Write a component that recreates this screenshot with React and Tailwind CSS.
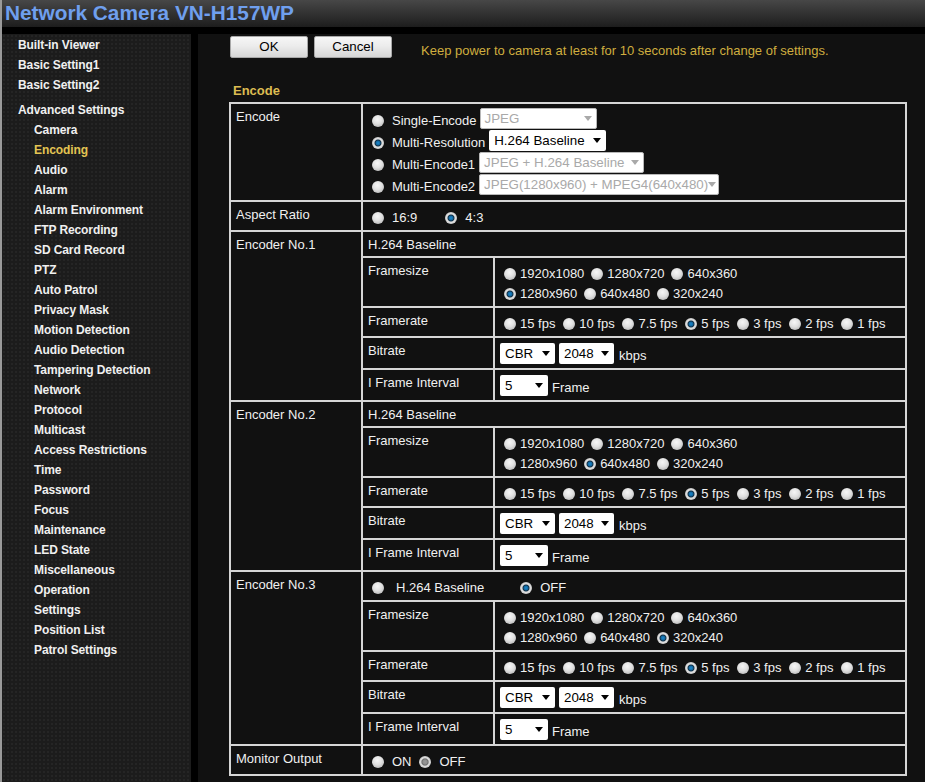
const font = { fontFamily: '"Liberation Sans", Arial, sans-serif' };

function Radio({ state = "off", className = "" }) {
  const look =
    state === "on"
      ? "bg-[radial-gradient(circle_at_50%_50%,#1b8ad0_0,#12679f_24%,#0f2f46_34%,#e4e4e4_48%,#c8c8c8_70%,#8e8e8e_100%)]"
      : state === "grey"
      ? "bg-[radial-gradient(circle_at_50%_50%,#9a9a9a_0,#8c8c8c_26%,#6d6d6d_36%,#dedede_50%,#c4c4c4_72%,#8e8e8e_100%)]"
      : "bg-[radial-gradient(circle_at_45%_35%,#f6f6f6_0,#e0e0e0_45%,#bcbcbc_80%,#8c8c8c_100%)]";
  return (
    <input
      type="radio"
      readOnly
      checked={state !== "off"}
      className={`appearance-none w-[12px] h-[12px] rounded-full shrink-0 ${look} ${className}`}
    />
  );
}

function Select({ label, width, disabled }) {
  return (
    <div
      className={`flex items-center justify-between h-[21px] pl-[5px] pr-[5px] rounded-[2px] bg-white text-[13.33px] shrink-0 ${
        disabled ? "text-[#a9a9a9] border border-[#b8b8b8] !pl-[4px] !pr-[4px]" : "text-black"
      } ${width}`}
    >
      <span className="whitespace-nowrap pt-[1px]">{label}</span>
      <svg width="8" height="5" viewBox="0 0 8 5" className="shrink-0">
        <path d="M0 0h8L4 5z" fill={disabled ? "#a9a9a9" : "#000"} />
      </svg>
    </div>
  );
}

function Opt({ label, state }) {
  return (
    <span className="flex items-center gap-[4px] whitespace-nowrap">
      <Radio state={state} />
      <span>{label}</span>
    </span>
  );
}

const cell = "border-2 border-[#d6d6d6] align-top px-[5px] pt-[5px] leading-[16px]";

function EncoderRows({ name, head, size, headH }) {
  const sizes1 = ["1920x1080", "1280x720", "640x360"];
  const sizes2 = ["1280x960", "640x480", "320x240"];
  const rates = ["15 fps", "10 fps", "7.5 fps", "5 fps", "3 fps", "2 fps", "1 fps"];
  return (
    <>
      <tr className={headH}>
        <td rowSpan={5} className={cell}>{name}</td>
        <td colSpan={2} className={cell}>{head}</td>
      </tr>
      <tr className="h-[50px]">
        <td className={cell}>Framesize</td>
        <td className="border-2 border-[#d6d6d6] align-top pl-[9px]">
          <div className="flex items-center gap-[7px] h-[20px] mt-[6px]">
            {sizes1.map((s) => <Opt key={s} label={s} />)}
          </div>
          <div className="flex items-center gap-[7px] h-[20px]">
            {sizes2.map((s) => <Opt key={s} label={s} state={s === size ? "on" : "off"} />)}
          </div>
        </td>
      </tr>
      <tr className="h-[30px]">
        <td className={cell}>Framerate</td>
        <td className="border-2 border-[#d6d6d6] pl-[9px] pt-[4px]">
          <div className="flex items-center gap-[7.8px]">
            {rates.map((r) => <Opt key={r} label={r} state={r === "5 fps" ? "on" : "off"} />)}
          </div>
        </td>
      </tr>
      <tr className="h-[32px]">
        <td className={cell}>Bitrate</td>
        <td className="border-2 border-[#d6d6d6] pl-[5px]">
          <div className="flex items-center gap-[4px]">
            <Select label="CBR" width="w-[55px]" />
            <Select label="2048" width="w-[55px]" />
            <span className="ml-[1px] mt-[5px]">kbps</span>
          </div>
        </td>
      </tr>
      <tr className="h-[32px]">
        <td className={cell}>I Frame Interval</td>
        <td className="border-2 border-[#d6d6d6] pl-[5px]">
          <div className="flex items-center gap-[4px]">
            <Select label="5" width="w-[48px]" />
            <span className="mt-[5px]">Frame</span>
          </div>
        </td>
      </tr>
    </>
  );
}

const nav = [
  ["Built-in Viewer", 0], ["Basic Setting1", 0], ["Basic Setting2", 0],
  ["Advanced Settings", 0, true], ["Camera", 1], ["Encoding", 1], ["Audio", 1], ["Alarm", 1],
  ["Alarm Environment", 1], ["FTP Recording", 1], ["SD Card Record", 1], ["PTZ", 1],
  ["Auto Patrol", 1], ["Privacy Mask", 1], ["Motion Detection", 1], ["Audio Detection", 1],
  ["Tampering Detection", 1], ["Network", 1], ["Protocol", 1], ["Multicast", 1],
  ["Access Restrictions", 1], ["Time", 1], ["Password", 1], ["Focus", 1], ["Maintenance", 1],
  ["LED State", 1], ["Miscellaneous", 1], ["Operation", 1], ["Settings", 1],
  ["Position List", 1], ["Patrol Settings", 1],
];

function Button({ children }) {
  return (
    <button className="w-[78px] h-[22px] rounded-[2px] border border-[#a8a8a8] bg-[linear-gradient(#f6f6f6,#ececec_45%,#d6d6d6)] text-black text-[13.33px] leading-[18px]">
      {children}
    </button>
  );
}

function EncodeLine({ state, label, select, width, disabled, tight }) {
  return (
    <div className="flex items-center h-[21px]">
      <Radio state={state} className="mt-[4px]" />
      <span className={`ml-[8px] mt-[4px] ${tight ? "mr-[3px]" : "mr-[4px]"}`}>{label}</span>
      <Select label={select} width={width} disabled={disabled} />
    </div>
  );
}

export default function App() {
  return (
    <div style={font} className="w-[925px] h-[782px] overflow-hidden bg-black flex flex-col text-[13px] text-[#f0f0f0] border-l-2 border-[#9a9a9a]">
      <header className="h-[27px] shrink-0 bg-[linear-gradient(#474747,#1d1d1d)] pl-[3px] text-[#6f9fee] font-bold text-[20.8px] leading-[26px]">
        Network Camera VN-H157WP
      </header>
      <div className="flex flex-1 mt-[7px] min-h-0">
        <aside className="w-[189px] shrink-0 bg-[#1c1c1c] bg-[radial-gradient(#252525_1px,transparent_1px)] bg-[length:4px_4px] pl-[16px] pt-[1px] font-bold text-[12px] tracking-[-0.1px]">
          {nav.map(([t, lvl, gap]) => (
            <div
              key={t}
              className={`h-[20px] leading-[20px] whitespace-nowrap ${lvl ? "pl-[16px]" : ""} ${gap ? "mt-[5px]" : ""} ${t === "Encoding" ? "text-[#e3c452]" : "text-[#f0f0f0]"}`}
            >
              {t}
            </div>
          ))}
        </aside>
        <main className="ml-[7px] flex-1 bg-[#111111] pl-[31px] pr-[18px] pt-[2px] min-w-0">
          <div className="flex items-center gap-[6px] h-[22px] ml-[1px]">
            <Button>OK</Button>
            <Button>Cancel</Button>
            <span className="ml-[23px] mt-[7px] whitespace-nowrap text-[#cfae3f]">Keep power to camera at least for 10 seconds after change of settings.</span>
          </div>
          <h2 className="mt-[25px] ml-[4px] h-[16px] leading-[16px] text-[13px] font-bold text-[#dcbc52]">Encode</h2>
          <table className="mt-[3px] border-collapse table-fixed w-[678px]">
            <colgroup>
              <col className="w-[132px]" />
              <col className="w-[132px]" />
              <col />
            </colgroup>
            <tbody>
              <tr className="h-[98px]">
                <td className={cell}>Encode</td>
                <td colSpan={2} className="border-2 border-[#d6d6d6] align-top pl-[9px] pt-[4px]">
                  <div className="flex flex-col gap-[1px]">
                    <EncodeLine label="Single-Encode" select="JPEG" width="w-[117px]" disabled tight />
                    <EncodeLine state="on" label="Multi-Resolution" select="H.264 Baseline" width="w-[117px]" />
                    <EncodeLine label="Multi-Encode1" select="JPEG + H.264 Baseline" width="w-[165px]" disabled />
                    <EncodeLine label="Multi-Encode2" select="JPEG(1280x960) + MPEG4(640x480)" width="w-[240px]" disabled />
                  </div>
                </td>
              </tr>
              <tr className="h-[30px]">
                <td className={cell}>Aspect Ratio</td>
                <td colSpan={2} className="border-2 border-[#d6d6d6] pl-[9px] pt-[4px]">
                  <div className="flex items-center">
                    <Radio /><span className="ml-[8px]">16:9</span>
                    <Radio state="on" className="ml-[28px]" /><span className="ml-[8px]">4:3</span>
                  </div>
                </td>
              </tr>
              <EncoderRows name="Encoder No.1" head="H.264 Baseline" size="1280x960" headH="h-[26px]" />
              <EncoderRows name="Encoder No.2" head="H.264 Baseline" size="640x480" headH="h-[26px]" />
              <EncoderRows
                name="Encoder No.3"
                size="320x240"
                headH="h-[30px]"
                head={
                  <div className="flex items-center ml-[4px] mt-[3px]">
                    <Radio /><span className="ml-[12px]">H.264 Baseline</span>
                    <Radio state="on" className="ml-[36px]" /><span className="ml-[8px]">OFF</span>
                  </div>
                }
              />
              <tr className="h-[30px]">
                <td className={cell}>Monitor Output</td>
                <td colSpan={2} className="border-2 border-[#d6d6d6] pl-[9px] pt-[3px]">
                  <div className="flex items-center">
                    <Radio /><span className="ml-[8px]">ON</span>
                    <Radio state="grey" className="ml-[7px]" /><span className="ml-[9px]">OFF</span>
                  </div>
                </td>
              </tr>
            </tbody>
          </table>
        </main>
      </div>
    </div>
  );
}
